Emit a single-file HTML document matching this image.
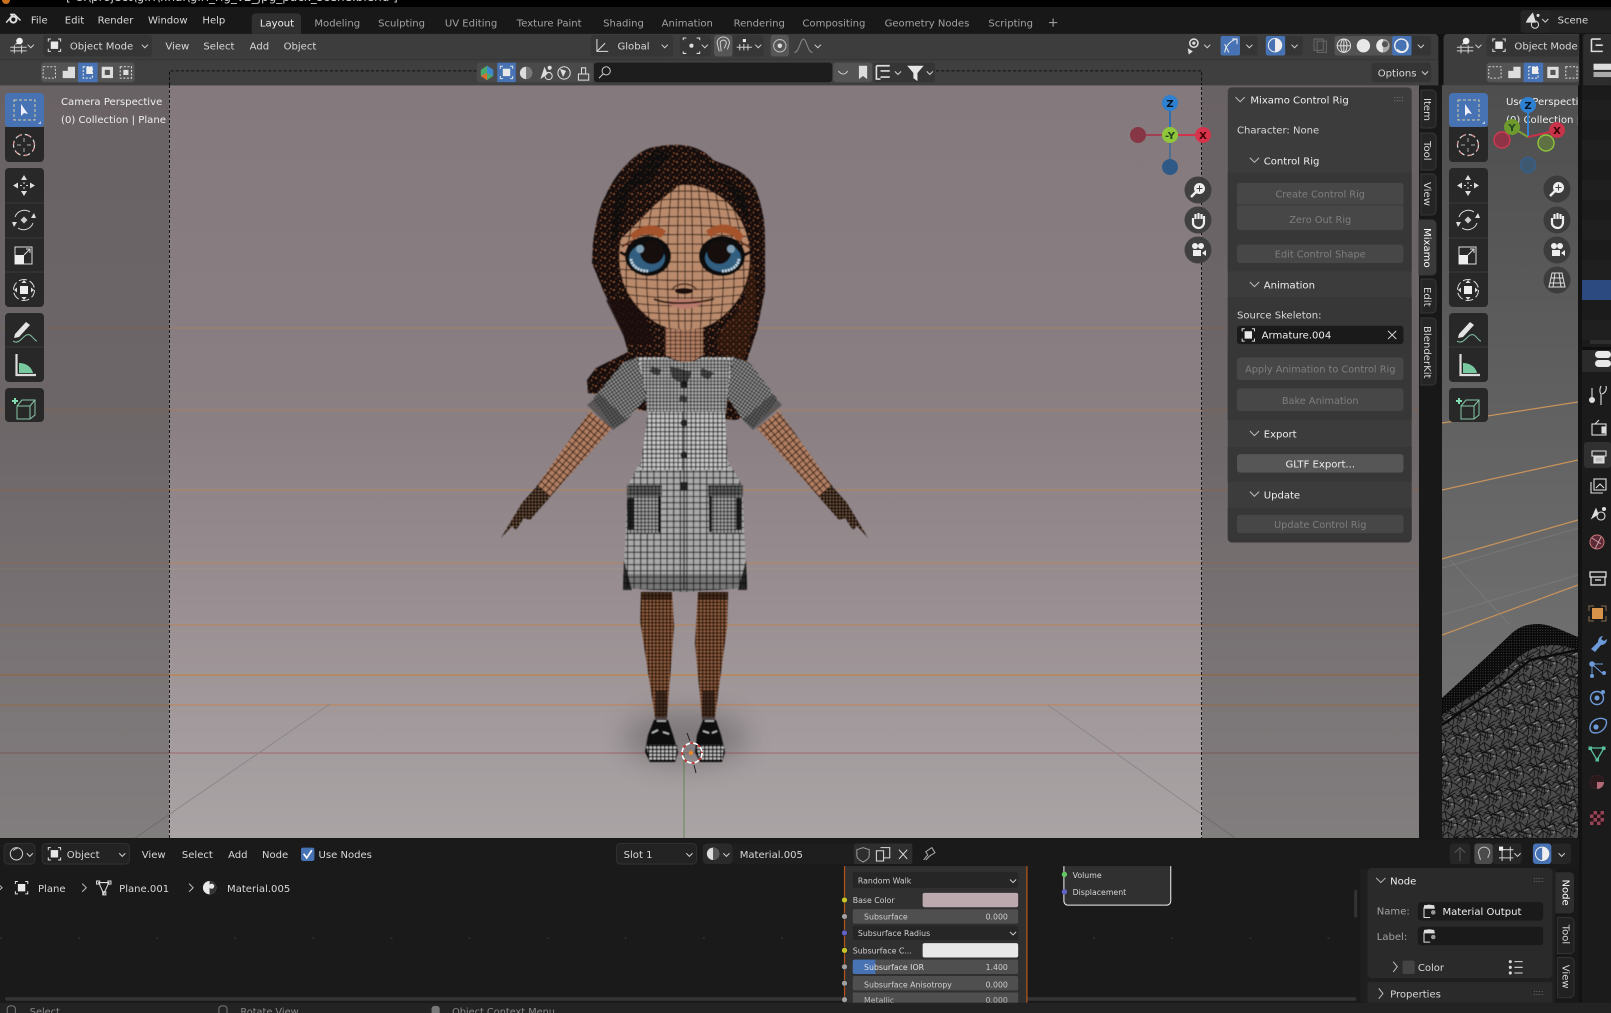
<!DOCTYPE html>
<html><head><meta charset="utf-8"><title>Blender</title>
<style>
html,body{margin:0;padding:0;background:#111;width:1611px;height:1013px;overflow:hidden}
svg{display:block;font-family:"DejaVu Sans","Liberation Sans",sans-serif;font-size:9.8px}
.t{fill:#d8d8d8}.m{fill:#a2a2a2}.w{fill:#eee}.d{fill:#7e7e7e}.c{text-anchor:middle}.e{text-anchor:end}
.s{fill:none;stroke:#ddd;stroke-width:1}
.o{fill:none;stroke:#c9803f}
</style></head><body>
<svg xmlns="http://www.w3.org/2000/svg" width="1611" height="1013" viewBox="0 0 1611 1013">
<defs>
<linearGradient id="vp" x1="0" y1="0" x2="0" y2="1"><stop offset="0" stop-color="#84797d"/><stop offset=".45" stop-color="#8a8083"/><stop offset=".7" stop-color="#9a9093"/><stop offset="1" stop-color="#aaa4a5"/></linearGradient>
<linearGradient id="vp2" x1="0" y1="0" x2="0" y2="1"><stop offset="0" stop-color="#4e4e4e"/><stop offset=".5" stop-color="#646464"/><stop offset="1" stop-color="#7a7a7a"/></linearGradient>
<pattern id="pDress" width="3.4" height="3.4" patternUnits="userSpaceOnUse"><rect width="3.4" height="3.4" fill="#b4b4b4"/><path d="M0 .4H3.4M.4 0V3.4" stroke="#111" stroke-width=".9"/></pattern>
<pattern id="pTorso" width="4.4" height="4.4" patternUnits="userSpaceOnUse"><rect width="4.4" height="4.4" fill="#c6c6c6"/><path d="M0 .5H4.4M.5 0V4.4" stroke="#0c0c0c" stroke-width=".9"/></pattern>
<pattern id="pSkirt" width="6.6" height="6.2" patternUnits="userSpaceOnUse"><rect width="6.6" height="6.2" fill="#a9a9a9"/><path d="M0 .5H6.6M.5 0V6.2" stroke="#111" stroke-width="1"/></pattern>
<pattern id="pPocket" width="3.6" height="3.6" patternUnits="userSpaceOnUse"><rect width="3.6" height="3.6" fill="#a0a0a0"/><path d="M0 .4H3.6M.4 0V3.6" stroke="#0c0c0c" stroke-width=".9"/></pattern>
<pattern id="pSleeve" width="3" height="3" patternUnits="userSpaceOnUse" patternTransform="rotate(-35)"><rect width="3" height="3" fill="#999"/><path d="M0 .4H3M.4 0V3" stroke="#111" stroke-width=".8"/></pattern>
<pattern id="pSleeveR" width="3" height="3" patternUnits="userSpaceOnUse" patternTransform="rotate(35)"><rect width="3" height="3" fill="#999"/><path d="M0 .4H3M.4 0V3" stroke="#111" stroke-width=".8"/></pattern>
<pattern id="pArm" width="5.4" height="5.4" patternUnits="userSpaceOnUse" patternTransform="rotate(-50)"><rect width="5.4" height="5.4" fill="#b07e62"/><path d="M0 .5H5.4M.5 0V5.4" stroke="#2c1810" stroke-width=".9"/></pattern>
<pattern id="pLeg" width="3.6" height="3.4" patternUnits="userSpaceOnUse"><rect width="3.6" height="3.4" fill="#9a6444"/><path d="M0 .5H3.6M.5 0V3.4" stroke="#140a06" stroke-width="1.3"/></pattern>
<pattern id="pNeck" width="5" height="4" patternUnits="userSpaceOnUse"><rect width="5" height="4" fill="#b07e62"/><path d="M0 .5H5M.5 0V4" stroke="#2c1810" stroke-width=".8"/></pattern>
<pattern id="pHair" width="9" height="8" patternUnits="userSpaceOnUse"><rect width="9" height="8" fill="#17100e"/><circle cx="2" cy="2" r=".8" fill="#b5683f"/><circle cx="6.5" cy="4.5" r=".7" fill="#8a4f30"/><circle cx="8" cy="1" r=".55" fill="#c0703f"/><circle cx="4" cy="6.8" r=".6" fill="#6a3c26"/></pattern>
<pattern id="pHair2" width="6" height="6" patternUnits="userSpaceOnUse"><rect width="6" height="6" fill="#2a1711"/><circle cx="1.5" cy="2" r=".9" fill="#7c452c"/><circle cx="4.5" cy="4.6" r=".8" fill="#603523"/></pattern>
<pattern id="pHand" width="3.2" height="3.2" patternUnits="userSpaceOnUse"><rect width="3.2" height="3.2" fill="#1c1410"/><circle cx="1.2" cy="1.2" r=".8" fill="#9a7058"/></pattern>
<pattern id="pShoe" width="4" height="3.6" patternUnits="userSpaceOnUse"><rect width="4" height="3.6" fill="#c8c8c8"/><path d="M0 .6H4M.6 0V3.6" stroke="#050505" stroke-width="1.4"/></pattern>
<pattern id="pMesh" width="44" height="38" patternUnits="userSpaceOnUse" patternTransform="scale(.55) rotate(-8)"><rect width="44" height="38" fill="#4a4a4a"/><path d="M0 6L12 0M6 10L20 2L30 12L44 4M0 20L10 12L22 22L36 14L44 22M4 34L16 24L28 34L40 26M12 0L10 12L16 24L14 38M30 12L28 34M36 14L40 26L38 38M20 2L22 22M0 30L8 38M24 38L28 34M0 14L44 30M0 26L44 10M20 38L36 0" stroke="#0d0d0d" stroke-width="1.5" fill="none"/><path d="M26 20L34 17M6 26L12 23M33 31L37 28" stroke="#8a8a8a" stroke-width="2.4"/></pattern>
<pattern id="pMeshD" width="2.6" height="2.6" patternUnits="userSpaceOnUse"><rect width="2.6" height="2.6" fill="#0a0a0a"/><circle cx="1" cy="1" r=".4" fill="#7a7a7a"/></pattern>
<pattern id="pGrid" width="76" height="76" patternUnits="userSpaceOnUse"><rect x="0" y="0" width="2" height="2" fill="#2b2b2b"/><rect x="19" y="0" width="1" height="1" fill="#222"/><rect x="38" y="0" width="1" height="1" fill="#222"/><rect x="57" y="0" width="1" height="1" fill="#222"/><rect x="0" y="38" width="1" height="1" fill="#222"/><rect x="38" y="38" width="1" height="1" fill="#222"/></pattern>
<filter id="soft" x="-5%" y="-5%" width="110%" height="110%"><feGaussianBlur stdDeviation=".5"/></filter>
<filter id="sh" x="-50%" y="-100%" width="200%" height="300%"><feGaussianBlur stdDeviation="14"/></filter>
<clipPath id="clipFace"><path d="M685 185C712 185 742 205 749 245C753 280 740 305 715 322C700 332 670 332 655 322C630 305 616 280 620 245C626 210 655 185 685 185Z"/></clipPath>
<clipPath id="clipVP2"><rect x="1442" y="85" width="136" height="753"/></clipPath>
<g id="obj"><path d="M-6 -3.5V-6H-3.5M3.5 -6H6V-3.5M6 3.5V6H3.5M-3.5 6H-6V3.5" fill="none" stroke="#ddd"/><rect x="-3.6" y="-3.6" width="7.2" height="7.2" fill="#e8e8e8"/></g>
<path id="chev" d="M-3 -1.5L0 1.5L3 -1.5" fill="none" stroke="#ccc" stroke-width="1"/>
<path id="chevL" d="M-4.5 -2.5L0 2L4.5 -2.5" fill="none" stroke="#bbb" stroke-width="1"/>
<g id="vpIcon"><path d="M-8 3H8M-8 6.5H8M-4 1V9M3 1V9" stroke="#ccc" fill="none"/><circle cx="1" cy="-3" r="3.2" fill="#eee"/><path d="M-3 0L0 -1" stroke="#eee"/></g>
<g id="tools">
 <rect x="5" y="93" width="39" height="34" rx="4" fill="#4772b3"/>
 <path d="M5 127H44V158a4 4 0 0 1-4 4H9a4 4 0 0 1-4-4Z" fill="#282828"/>
 <rect x="5" y="168" width="39" height="139" rx="4" fill="#282828"/>
 <path d="M5 203H44M5 238H44M5 272H44" stroke="#3a3a3a"/>
 <rect x="5" y="313" width="39" height="69" rx="4" fill="#282828"/><path d="M5 347H44" stroke="#3a3a3a"/>
 <rect x="5" y="388" width="39" height="34" rx="4" fill="#282828"/>
 <rect x="14" y="100" width="21" height="20" fill="none" stroke="#d9cfa0" stroke-dasharray="3 2" stroke-width="1"/><path d="M21 104V116L24 113L28 114Z" fill="#eef"/><path d="M41 124h-3l3-3z" fill="#b7c9e6"/>
 <circle cx="24" cy="145" r="10.5" fill="none" stroke="#ddd" stroke-width="1.2" stroke-dasharray="7 3"/><circle cx="24" cy="145" r="10.5" fill="none" stroke="#d88" stroke-width="1.2" stroke-dasharray="3 7" stroke-dashoffset="-3"/><path d="M24 138V142M24 148V152M17 145H21M27 145H31" stroke="#aaa"/>
 <path d="M24 175l-3 5h6zM24 196l-3-5h6zM13 185.5l5-3v6zM35 185.5l-5-3v6z" fill="#ddd"/><path d="M24 182V184M24 187V189M20 185.5H22M26 185.5H28" stroke="#ddd"/>
 <path d="M15 217a10 10 0 0 1 15-5M33 223a10 10 0 0 1-15 5" fill="none" stroke="#ddd"/><path d="M34 213l2 5h-5zM14 227l-2-5h5z" fill="#ddd"/><path d="M24 216.500l3.500 3.500-3.500 3.500-3.500-3.500z" fill="#ccc"/>
 <rect x="15" y="247" width="17" height="17" fill="none" stroke="#ddd"/><rect x="15" y="255" width="9" height="9" fill="#eee"/><path d="M24 255L30 249M26 249H30V253" fill="none" stroke="#ddd"/>
 <circle cx="24" cy="290" r="10.5" fill="none" stroke="#ddd" stroke-dasharray="8 3"/><rect x="20" y="286" width="8" height="8" fill="#eee"/><path d="M24 280l-2.500 3h5zM24 300l-2.500-3h5zM14 290l3-2.500v5zM34 290l-3-2.500v5z" fill="#ddd"/>
 <path d="M15 334L26 322L30 325L19 337L14 338Z" fill="#e4e4e4"/><path d="M13 341C20 346 24 332 30 335C33 337 35 341 37 341" fill="none" stroke="#86c7a8" stroke-width="1"/>
 <path d="M16.500 354V375H36" fill="none" stroke="#ddd" stroke-width="2.2"/><path d="M19 363C27 363 32 368 33 373H19Z" fill="#78c9a0"/>
 <path d="M12 401h6M15 398v6" stroke="#7fdcae" stroke-width="2"/><path d="M17 406L22 400H35V415L30 419H17ZM17 406H30V419M30 406L35 400" fill="none" stroke="#86c7a8"/>
</g>
<g id="navZoom"><circle r="13.5" fill="#3a3a3a" opacity=".9"/><circle cx="1.5" cy="-1.500" r="5.500" fill="#eee"/><path d="M-2 2L-7 7" stroke="#eee" stroke-width="2.5"/><path d="M1.500 -4.500V1.500M-1.500 -1.500H4.500" stroke="#444"/></g>
<g id="navHand"><circle r="13.5" fill="#3a3a3a" opacity=".9"/><path d="M-5 -2V3C-5 6 -2 8 1 8C4 8 6 5 6 2V-4M-2.500 -1V-6M.5 -1V-7M3.500 -1V-6" fill="none" stroke="#eee" stroke-width="2.2"/></g>
<g id="navCam"><circle r="13.5" fill="#3a3a3a" opacity=".9"/><circle cx="-3" cy="-4" r="3" fill="#eee"/><circle cx="3" cy="-4" r="3" fill="#eee"/><rect x="-5" y="0" width="8" height="6" fill="#eee"/><path d="M4 3L8 0V6Z" fill="#eee"/></g>
</defs>

<rect width="1611" height="1013" fill="#121212"/>
<rect width="1611" height="7" fill="#000"/>
<circle cx="6" cy="0" r="4" fill="#c8701c"/>
<text x="66" y="1" style="font-size:12px" fill="#ccc">[ C:\project\girl\final\girl_rig_v2_jpg_pack_scene.blend ] *</text>
<rect y="7" width="1611" height="27" fill="#181818"/>

<!-- MAIN VIEWPORT -->
<rect x="0" y="85" width="1419" height="753" fill="url(#vp)"/>
<g stroke-width="1.2">
 <path d="M0 328H1419" class="o" opacity=".35"/><path d="M0 410H1419" class="o" opacity=".4"/><path d="M0 490H1419" class="o" opacity=".5"/><path d="M0 563H1419" class="o" opacity=".5"/><path d="M0 625H1419" class="o" opacity=".55"/><path d="M0 675H1419" class="o" stroke-width="1.8" opacity=".65"/><path d="M0 705H1419" class="o" opacity=".65"/>
 <path d="M0 631H1419M0 681H1419M0 711H1419M0 569H1419" stroke="#a39a8c" stroke-opacity=".5" fill="none"/>
 <path d="M0 753H1419" stroke="#a0606a" stroke-opacity=".7"/>
 <path d="M684 753V838" stroke="#6f8c60"/>
 <path d="M135 838L330 704M1235 838L1048 705" stroke="#8d8789" stroke-width="1"/>
</g>
<rect x="0" y="85" width="169" height="753" fill="#3a3a3a" opacity=".36"/>
<rect x="1202" y="85" width="217" height="753" fill="#3a3a3a" opacity=".36"/>

<!-- character -->
<ellipse cx="686" cy="738" rx="62" ry="26" fill="#000" opacity=".22" filter="url(#sh)"/>
<g filter="url(#soft)">
 <path d="M673 145C690 144 705 150 713 160C722 164 728 165 733 168C748 175 755 185 757 193C765 215 765 230 765 243L765 290L757 330L747 360L746 400C747 412 745 418 735 420L640 410L607 395L588 393L587 380L596 368L628 352L622 330L603 290L592 263L593 243C596 222 600 205 606 195C612 180 630 155 650 148C660 146 665 145 673 145Z" fill="url(#pHair)"/>
 <path d="M748 250C762 290 757 320 745 355L738 395L715 340L745 300Z" fill="url(#pHair2)"/>
 <path d="M606 300L628 345L655 345L640 300Z" fill="#1c1210" opacity=".85"/>
 <path d="M610 250L640 195L672 152L655 150L615 195Z" fill="#0c0707" opacity=".55"/>
 <path d="M690 150L745 195L750 225L715 165Z" fill="#0c0707" opacity=".6"/>
 <path d="M665 322L665 355L680 362L692 362L703 355L703 322Z" fill="url(#pNeck)"/>
 <g id="armL"><path d="M590 411L536 487L550 497L612 428Z" fill="url(#pArm)"/><path d="M538 485L522 503L501 538L512 526L516 530L524 518L530 520L550 497Z" fill="url(#pHand)"/></g>
 <use href="#armL" transform="translate(1369,0) scale(-1,1)"/>
 <path d="M641 592L672 592L674 627L667 717L655 717L640 620Z" fill="url(#pLeg)"/>
 <path d="M698 592L728 592L727 627L715 717L702 717L695 643Z" fill="url(#pLeg)"/>
 <path d="M641 592H672V600H641ZM698 592H728V600H698Z" fill="#140a06" opacity=".55"/>
 <path d="M655 690L667 690L667 720L655 720ZM702 690L715 690L715 720L702 720Z" fill="#1a120e" opacity=".6"/>
 <path d="M654 720L668 720L673 735L678 752L675 762L650 762L645 752L648 735Z" fill="#0a0a0a"/>
 <path d="M703 720L716 720L721 735L725 752L722 762L700 762L695 752L697 735Z" fill="#0a0a0a"/>
 <path d="M646 745H677L675 761H650Z" fill="url(#pShoe)"/><path d="M696 745H724L722 761H700Z" fill="url(#pShoe)"/>
 <path d="M657 721h9M705 721h9M652 733l6-3M663 732l6 2M703 731l6 2M712 733l5-2" stroke="#ddd" stroke-width="1.6" opacity=".85"/>
 <path d="M640 462L628 485L623 588L683 592L747 588L742 485L727 460Z" fill="url(#pSkirt)"/>
 <path d="M623 574L747 574L747 588L683 592L623 588Z" fill="#1a1a1a" opacity=".35"/>
 <path d="M624 560L632 590L623 590ZM746 560L738 590L747 590Z" fill="#0a0a0a" opacity=".8"/>
 <path d="M647 397L648 413L640 470L728 470L725 417L727 397L733 357L703 357L692 362L680 362L665 357L637 357Z" fill="url(#pTorso)"/>
 <path d="M640 360L665 358L680 362L692 362L703 358L730 360L726 412L647 412Z" fill="url(#pDress)" opacity=".9"/>
 <path d="M684 362V590" stroke="#0c0c0c" stroke-width="1.2"/>
 <circle cx="684" cy="385" r="3.5" fill="#222"/><circle cx="684" cy="423" r="3.5" fill="#222"/><circle cx="684" cy="455" r="3.5" fill="#222"/><rect x="680" y="482" width="8" height="8" fill="#222"/>
 <path d="M652 366L662 370L658 376L650 372ZM670 366L692 372L686 386L672 378ZM702 368L714 373L708 380L700 375ZM680 395l8 2-2 6-7-2Z" fill="#111" opacity=".6"/>
 <path d="M637 357L623 363L592 400L613 428L627 420L647 397Z" fill="url(#pSleeve)"/>
 <path d="M733 357L750 363L778 400L753 428L743 420L727 397Z" fill="url(#pSleeveR)"/>
 <path d="M587 405L613 430L627 420L600 394Z" fill="#3a3a3a" opacity=".6"/>
 <path d="M782 405L753 430L743 420L772 394Z" fill="#3a3a3a" opacity=".6"/>
 <path d="M628 485H662L660 533H628Z" fill="url(#pPocket)"/><path d="M708 485H742V533H710Z" fill="url(#pPocket)"/>
 <path d="M627 485H662V496H627ZM708 485H743V496H708Z" fill="#111" opacity=".45"/>
 <path d="M628 498H634V530H628ZM736 498H742V530H736ZM658 496h3v36h-3ZM709 496h3v36h-3Z" fill="#0a0a0a" opacity=".85"/>
 <!-- face -->
 <path d="M685 185C712 185 742 205 749 245C753 280 740 305 715 322C700 332 670 332 655 322C630 305 616 280 620 245C626 210 655 185 685 185Z" fill="#b98a6c"/>
 <g clip-path="url(#clipFace)" fill="none" stroke="#2c1810" stroke-width=".95">
  <path d="M685 183V335M679 183Q676 255 679 335M691 183Q694 255 691 335M672 183Q664 255 670 335M698 183Q706 255 700 335M664 183Q652 255 661 335M706 183Q718 255 709 335M656 185Q640 255 651 335M714 185Q730 255 719 335M648 190Q628 255 641 335M722 190Q742 255 729 335M640 198Q618 255 631 330M730 198Q752 255 739 330"/>
  <path d="M615 190Q685 176 755 190M615 197Q685 185 755 197M615 205Q685 193 755 205M615 213Q685 202 755 213M615 221Q685 212 755 221M615 229Q685 222 755 229M615 237Q685 232 755 237M615 245Q685 243 755 245M615 253Q685 253 755 253M615 261Q685 263 755 261M615 269Q685 274 755 269M615 277Q685 284 755 277M615 285Q685 294 755 285M615 293Q685 303 755 293M615 301Q685 311 755 301M615 309Q685 319 755 309M615 316Q685 326 755 316"/>
 </g>
 <path d="M682 183L655 205L623 237L616 240L630 190L660 178Z" fill="url(#pHair)"/>
 <path d="M630 235C640 224 655 222 666 231L661 238C650 232 640 233 634 240Z" fill="#a4522c"/>
 <path d="M706 231C718 221 736 222 744 237L738 241C730 231 718 231 710 237Z" fill="#a4522c"/>
 <path d="M622 247C635 236 655 236 668 248M702 248C718 236 735 236 750 248" stroke="#5b2c18" stroke-width="1.8" fill="none"/>
 <ellipse cx="648" cy="256" rx="23" ry="20" fill="#0a0b0e"/><ellipse cx="722" cy="256" rx="23" ry="20" fill="#0a0b0e"/>
 <ellipse cx="647" cy="258" rx="18" ry="14" fill="#325f7f"/><ellipse cx="723" cy="258" rx="18" ry="14" fill="#325f7f"/>
 <path d="M631 259A16 13 0 0 0 648 271" stroke="#c9dbe6" stroke-width="2.600" fill="none" stroke-dasharray="2 1"/><path d="M739 259A16 13 0 0 1 722 271" stroke="#c9dbe6" stroke-width="2.600" fill="none" stroke-dasharray="2 1"/>
 <circle cx="652" cy="252" r="12" fill="#120d0c"/><circle cx="719" cy="252" r="12" fill="#120d0c"/>
 <circle cx="640" cy="249" r="4" fill="#7f9eb2"/><circle cx="731" cy="249" r="4" fill="#7f9eb2"/>
 <path d="M620 252L627 256M743 256L750 252" stroke="#120b08" stroke-width="3"/>
 <path d="M672 290C676 282 692 282 697 290" stroke="#4d2c1c" stroke-width="1.400" fill="none"/>
 <ellipse cx="684" cy="291" rx="9" ry="3" fill="#1a0e09"/>
 <path d="M666 302C678 298 690 298 703 302C695 311 675 311 666 302Z" fill="#b87a6c"/>
 <path d="M654 299C665 304 690 305 714 299" stroke="#2a1209" stroke-width="1.800" fill="none"/>
</g>
<circle cx="692" cy="753" r="10" fill="none" stroke="#fff" stroke-width="1.600" stroke-dasharray="5 3"/>
<circle cx="692" cy="753" r="10" fill="none" stroke="#d03030" stroke-width="1.600" stroke-dasharray="3 5" stroke-dashoffset="-5"/>
<circle cx="691" cy="753" r="2.200" fill="#e38a30"/>
<path d="M687 733L690 741M694 765L696 773" stroke="#222"/>

<path d="M169.5 838V71H1201.5V838" fill="none" stroke="#000" stroke-opacity=".85" stroke-dasharray="3 2"/>

<!-- main gizmo -->
<g>
 <path d="M1170 111V127" stroke="#2f6fb0" stroke-width="2"/><path d="M1146 135H1162" stroke="#a04050" stroke-width="2"/><path d="M1178 135H1195" stroke="#d0334a" stroke-width="2"/><path d="M1170 143V159" stroke="#4f6f90" stroke-width="2"/>
 <circle cx="1138" cy="135" r="8" fill="#863644"/><circle cx="1203" cy="135" r="8" fill="#d5344c"/><circle cx="1170" cy="103" r="8" fill="#2e80d0"/><circle cx="1170" cy="167" r="8" fill="#2f5a88"/>
 <circle cx="1170" cy="135" r="8" fill="#8fc63a"/>
 <text x="1203" y="139" class="c" style="font-size:10px;font-weight:bold" fill="#400">X</text><text x="1170" y="107" class="c" style="font-size:10px;font-weight:bold" fill="#012">Z</text><text x="1170" y="139" class="c" style="font-size:10px;font-weight:bold" fill="#242">-Y</text>
</g>
<use href="#navZoom" x="1198" y="190"/><use href="#navHand" x="1198" y="220"/><use href="#navCam" x="1198" y="250"/>

<use href="#tools"/>
<text x="61" y="105" class="w" style="font-size:10.1px">Camera Perspective</text>
<text x="61" y="123" class="w" style="font-size:10.1px">(0) Collection | Plane</text>

<rect x="1419" y="85" width="23" height="753" fill="#181818"/>
<g fill="#252525" stroke="#383838">
 <path d="M1421 90H1432a4 4 0 0 1 4 4V124a4 4 0 0 1-4 4H1421Z"/>
 <path d="M1421 133H1432a4 4 0 0 1 4 4V166a4 4 0 0 1-4 4H1421Z"/>
 <path d="M1421 174H1432a4 4 0 0 1 4 4V211a4 4 0 0 1-4 4H1421Z"/>
 <path d="M1419 220H1432a4 4 0 0 1 4 4V271a4 4 0 0 1-4 4H1419Z" fill="#3a3a3a"/>
 <path d="M1421 279H1432a4 4 0 0 1 4 4V309a4 4 0 0 1-4 4H1421Z"/>
 <path d="M1421 318H1432a4 4 0 0 1 4 4V381a4 4 0 0 1-4 4H1421Z"/>
</g>
<g style="font-size:10.1px" class="t">
 <text transform="translate(1424,98) rotate(90)">Item</text>
 <text transform="translate(1424,141) rotate(90)">Tool</text>
 <text transform="translate(1424,182) rotate(90)">View</text>
 <text transform="translate(1424,228) rotate(90)" fill="#fff">Mixamo</text>
 <text transform="translate(1424,287) rotate(90)">Edit</text>
 <text transform="translate(1424,326) rotate(90)">BlenderKit</text>
</g>

<!-- RIGHT VIEWPORT -->
<rect x="1442" y="85" width="136" height="753" fill="url(#vp2)"/>
<g clip-path="url(#clipVP2)">
 <path d="M1442 423L1578 402M1442 490L1578 460M1442 559L1578 520M1442 635L1578 585" stroke="#c9935a" stroke-width="1.200" fill="none"/>
 <path d="M1442 568L1578 528M1442 615L1578 575M1450 560L1510 625" stroke="#808080" stroke-opacity=".6" fill="none"/>
 <path d="M1442 698L1478 665L1510 635C1520 625 1530 624 1540 624C1555 626 1565 632 1578 637V838H1442Z" fill="url(#pMesh)"/>
 <path d="M1442 698L1478 665L1510 635C1520 625 1530 624 1540 624C1555 626 1565 632 1578 637V650C1550 640 1530 645 1510 665L1480 690L1442 715Z" fill="url(#pMeshD)"/>
 <path d="M1442 725L1500 685L1530 660L1578 650" stroke="#0c0c0c" stroke-width="2.500" fill="none"/>
</g>
<g transform="translate(1444,0)"><use href="#tools"/></g>
<g clip-path="url(#clipVP2)">
 <text x="1506" y="105" class="w" style="font-size:10.1px">User Perspective</text>
 <text x="1506" y="123" class="w" style="font-size:10.1px">(0) Collection | Plane</text>
 <path d="M1528 137V110" stroke="#2e80d0" stroke-width="2"/><path d="M1528 137L1515 129" stroke="#7ba33a" stroke-width="2"/><path d="M1528 137L1550 132" stroke="#c8334a" stroke-width="2"/>
 <circle cx="1502" cy="140" r="8" fill="#8f3446" stroke="#cf3a52" stroke-width="1.400"/>
 <circle cx="1512" cy="127" r="8" fill="#6f9a2e"/><circle cx="1557" cy="130" r="8" fill="#c8334a"/>
 <circle cx="1528" cy="105" r="8" fill="#2e80d0"/>
 <circle cx="1546" cy="143" r="8" fill="#5f7042" stroke="#8fc63a" stroke-width="1.400"/>
 <circle cx="1528" cy="165" r="7.500" fill="#3e5870" stroke="#35608e" stroke-width="1.400"/>
 <text x="1512" y="131" class="c" style="font-size:10px;font-weight:bold" fill="#242">Y</text><text x="1557" y="134" class="c" style="font-size:10px;font-weight:bold" fill="#300">X</text><text x="1528" y="109" class="c" style="font-size:10px;font-weight:bold" fill="#012">Z</text>
</g>
<use href="#navZoom" x="1557" y="189"/><use href="#navHand" x="1557" y="220"/><use href="#navCam" x="1557" y="250"/>
<circle cx="1557" cy="280" r="13.500" fill="#3a3a3a" opacity=".9"/><path d="M1552 273H1562L1565 287H1549ZM1551 278H1563M1550 283H1564M1555 273L1553 287M1559 273L1561 287" stroke="#ddd" fill="none"/>

<!-- right column -->
<rect x="1582" y="34" width="29" height="979" fill="#1b1b1b"/>
<g fill="#1f1f1f"><rect x="1582" y="100" width="29" height="20"/><rect x="1582" y="140" width="29" height="20"/><rect x="1582" y="180" width="29" height="20"/><rect x="1582" y="220" width="29" height="20"/><rect x="1582" y="260" width="29" height="20"/><rect x="1582" y="320" width="29" height="20"/></g>
<rect x="1582" y="280" width="29" height="20" fill="#2c4a80"/>
<rect x="1590" y="340" width="21" height="4" fill="#2e2e2e"/>
<rect x="1582" y="347" width="29" height="23" fill="#0f0f0f"/>
<path d="M1582 350h29v22h-29z" fill="#2b2b2b"/>
<rect x="1595" y="351" width="16" height="7" rx="3.500" fill="#e8e8e8"/><rect x="1595" y="360" width="16" height="7" rx="3.500" fill="#e8e8e8"/>
<rect x="1584" y="442" width="27" height="26" rx="3" fill="#303030"/>
<g fill="none" stroke="#ddd" stroke-width="1.100">
 <path d="M1592 388V398M1601 386C1599 390 1600 393 1601 394V405M1606 386C1607 390 1605 393 1602 394"/><circle cx="1592" cy="400" r="2.500" fill="#ddd"/>
 <rect x="1592" y="424" width="14" height="11"/><path d="M1595 424L1599 420"/><rect x="1602" y="427" width="3" height="6" fill="#ddd"/>
 <path d="M1592 451H1606V456H1592ZM1594 456V463H1604V456"/><rect x="1595" y="457" width="8" height="5" fill="#bbb"/>
 <rect x="1594" y="479" width="12" height="11"/><path d="M1591 482V493H1603"/><path d="M1596 488L1600 484L1604 488"/>
 <circle cx="1601" cy="516" r="4"/><path d="M1592 518L1596 509L1598 514Z" fill="#ddd"/><circle cx="1604" cy="509" r="1.500" fill="#ddd"/>
</g>
<circle cx="1597" cy="542" r="7" fill="#5c2a34" stroke="#c77"/><path d="M1592 538L1601 544M1595 549L1601 537" stroke="#c99aa4" fill="none"/>
<path d="M1590 572H1606V577H1590ZM1591 577V585H1605V577ZM1595 580H1601" fill="none" stroke="#e8e8e8" stroke-width="1.200"/>
<rect x="1592" y="608" width="11" height="11" fill="#d8934a"/><path d="M1589 611V606H1594M1601 606H1606V611M1606 616V621H1601M1594 621H1589V616" stroke="#8a6c4c" fill="none"/>
<path d="M1603 636C1600 636 1598 639 1598 642L1591 649L1595 652L1601 645C1605 645 1607 642 1607 639L1604 641L1601 639Z" fill="#6d9ad8"/>
<path d="M1592 664L1602 673M1592 664L1592 676M1592 664L1603 664" stroke="#6d9ad8" fill="none"/><circle cx="1592" cy="664" r="2.800" fill="#6d9ad8"/><circle cx="1604" cy="673" r="2" fill="#6d9ad8"/><circle cx="1592" cy="676" r="2" fill="#6d9ad8"/>
<circle cx="1597" cy="698" r="6.500" fill="none" stroke="#6d9ad8" stroke-width="1.400"/><circle cx="1597" cy="698" r="2.500" fill="#6d9ad8"/><circle cx="1603" cy="692" r="2" fill="#6d9ad8"/>
<path d="M1590 728C1590 720 1600 716 1606 720C1608 725 1603 733 1595 733C1592 733 1590 731 1590 728Z" fill="none" stroke="#6d9ad8" stroke-width="1.400"/><circle cx="1596" cy="727" r="2.600" fill="#6d9ad8"/>
<path d="M1590 748H1604L1597 760Z" fill="none" stroke="#58c09a" stroke-width="1.300"/><rect x="1588.5" y="746.5" width="3.500" height="3.500" fill="#58c09a"/><rect x="1602" y="746.5" width="3.500" height="3.500" fill="#58c09a"/><rect x="1595.5" y="758" width="3.500" height="3.500" fill="#58c09a"/>
<circle cx="1597" cy="782" r="7" fill="#b16a76"/><path d="M1597 775A7 7 0 0 1 1604 782H1597V789A7 7 0 0 1 1597 775Z" fill="#2a1a1c"/>
<rect x="1590" y="811" width="14" height="14" fill="#944454"/><path d="M1590 811h3.500v3.500h-3.500zM1597 811h3.500v3.500h-3.500zM1593.500 814.500h3.500v3.500h-3.500zM1600.500 814.500h3.500v3.500h-3.500zM1590 818h3.500v3.500h-3.500zM1597 818h3.500v3.500h-3.500zM1593.500 821.500h3.500v3.500h-3.500zM1600.500 821.500h3.500v3.500h-3.500z" fill="#241417"/>

<g transform="scale(1.02742)">
 <circle cx="13" cy="19" r="3" fill="none" stroke="#ddd" stroke-width="2"/><path d="M6 22L12 15L10 14H14L20 20" stroke="#ddd" fill="none" stroke-width="1.400"/>
 <text x="30" y="23" class="t">File</text><text x="63" y="23" class="t">Edit</text><text x="95" y="23" class="t">Render</text><text x="144" y="23" class="t">Window</text><text x="197" y="23" class="t">Help</text>
 <path d="M245 33V17a4 4 0 0 1 4-4H289a4 4 0 0 1 4 4V33Z" fill="#303030"/>
 <text x="253" y="26" class="w">Layout</text>
 <g class="m"><text x="306" y="26">Modeling</text><text x="368" y="26">Sculpting</text><text x="433" y="26">UV Editing</text><text x="503" y="26">Texture Paint</text><text x="587" y="26">Shading</text><text x="644" y="26">Animation</text><text x="714" y="26">Rendering</text><text x="781" y="26">Compositing</text><text x="861" y="26">Geometry Nodes</text><text x="962" y="26">Scripting</text></g>
 <path d="M1021 22H1029M1025 18V26" stroke="#aaa"/>
 <rect x="1480" y="10" width="30" height="22" rx="3" fill="#252525"/><rect x="1509" y="10" width="59" height="22" fill="#222"/>
 <path d="M1487 18L1492 12L1495 22H1485Z" fill="#ddd"/><circle cx="1494" cy="24" r="3.500" fill="none" stroke="#ddd"/><circle cx="1497" cy="15" r="1.500" fill="#ddd"/>
 <use href="#chev" x="1504" y="20"/>
 <text x="1516" y="23" class="t">Scene</text>

 <path d="M0 33H1396a4 4 0 0 1 4 4V83H0Z" fill="#3d3d3d"/>
 <path d="M0 58H1400" stroke="#353535"/>
 <rect x="0" y="59" width="1400" height="24" fill="#3f3f3f"/>
 <path d="M165 83V69H1169.500V83" fill="none" stroke="#111" stroke-dasharray="3 2"/>
 <use href="#vpIcon" x="18" y="43"/><use href="#chev" x="30" y="45"/>
 <rect x="42" y="34" width="106" height="21" rx="3" fill="#353535"/>
 <use href="#obj" x="53" y="44"/><text x="68" y="48" class="t">Object Mode</text><use href="#chev" x="141" y="45"/>
 <g class="t"><text x="161" y="48">View</text><text x="198" y="48">Select</text><text x="243" y="48">Add</text><text x="276" y="48">Object</text></g>
 <rect x="575" y="34" width="80" height="21" rx="3" fill="#363636"/>
 <path d="M581 38V50H592M581 50L589 42" stroke="#ddd" fill="none"/><text x="601" y="48" class="t">Global</text><use href="#chev" x="647" y="45"/>
 <rect x="662" y="34" width="30" height="21" rx="3" fill="#363636"/>
 <path d="M665 39V37H668M678 37H681V39M681 50V52H678M668 52H665V50" stroke="#ddd" fill="none"/><circle cx="673" cy="44.500" r="2" fill="#ddd"/><use href="#chev" x="686" y="45"/>
 <rect x="695" y="34" width="18" height="21" rx="3" fill="#565656"/><path d="M700 50L698 42A6 6 0 0 1 710 42L708 48M702 50L701 42A3 3 0 0 1 707 42L705 47" fill="none" stroke="#ccc"/>
 <rect x="713" y="34" width="30" height="21" rx="3" fill="#363636"/>
 <rect x="723" y="38" width="3" height="3" fill="#eee"/><path d="M717 46H732M720 43V49M724 43V49M728 43V49" stroke="#ccc"/><use href="#chev" x="738" y="45"/>
 <rect x="750" y="34" width="18" height="21" rx="3" fill="#565656"/><circle cx="759" cy="44.500" r="6" fill="none" stroke="#bbb"/><circle cx="759" cy="44.500" r="2.200" fill="#ddd"/>
 <path d="M773 51C778 51 779 38 782 38C785 38 786 51 791 51" fill="none" stroke="#888"/><use href="#chev" x="796" y="45"/>

 <circle cx="1162" cy="42" r="4" fill="none" stroke="#ddd" stroke-width="1.500"/><circle cx="1162" cy="42" r="1.600" fill="#ddd"/><path d="M1156 47L1161 50L1157 53Z" fill="#ddd"/><use href="#chev" x="1175" y="45"/>
 <rect x="1188" y="35" width="19" height="19" rx="2" fill="#4772b3"/><path d="M1192 51C1193 44 1198 40 1203 38M1199 38H1204V43" fill="none" stroke="#eee"/><path d="M1192 43L1196 51" stroke="#eee"/>
 <rect x="1207" y="35" width="17" height="19" rx="2" fill="#353535"/><use href="#chev" x="1216" y="45"/>
 <rect x="1232" y="35" width="19" height="19" rx="2" fill="#4772b3"/><circle cx="1241" cy="44" r="6.500" fill="none" stroke="#eee"/><path d="M1241 37.500A6.500 6.500 0 0 1 1241 50.500Z" fill="#eee"/>
 <rect x="1251" y="35" width="17" height="19" rx="2" fill="#353535"/><use href="#chev" x="1260" y="45"/>
 <rect x="1279" y="38" width="9" height="11" fill="none" stroke="#666"/><rect x="1282" y="40" width="9" height="11" fill="none" stroke="#666"/>
 <rect x="1299" y="35" width="75" height="19" rx="2" fill="#545454"/><rect x="1355" y="35" width="19" height="19" rx="2" fill="#4772b3"/>
 <circle cx="1308" cy="44.500" r="6.500" fill="none" stroke="#ddd"/><path d="M1301.500 44.500H1314.500M1308 38V51" stroke="#ddd"/><ellipse cx="1308" cy="44.500" rx="3" ry="6.500" fill="none" stroke="#ddd"/>
 <circle cx="1327" cy="44.500" r="6.500" fill="#e8e8e8"/>
 <circle cx="1346" cy="44.500" r="6.500" fill="#aaa"/><path d="M1346 38A6.500 6.500 0 0 0 1346 51Z" fill="#e8e8e8"/><circle cx="1348" cy="43" r="3" fill="#555"/>
 <circle cx="1364" cy="44.500" r="6.500" fill="none" stroke="#eee" stroke-width="1.400"/><path d="M1360 48A5 5 0 0 0 1369 42" stroke="#eee" fill="none" stroke-width="1.400"/>
 <rect x="1374" y="35" width="19" height="19" rx="2" fill="#353535"/><use href="#chev" x="1383" y="45"/>

 <rect x="40" y="61" width="91" height="19" rx="3" fill="#545454"/><rect x="76" y="61" width="19" height="19" fill="#4772b3"/>
 <rect x="42" y="65" width="12" height="11" fill="none" stroke="#ccc" stroke-dasharray="2 1.500"/>
 <path d="M61 74V69H66V65H73V76H61Z" fill="#ddd"/>
 <rect x="81" y="65" width="9" height="11" fill="none" stroke="#eee" stroke-dasharray="2 1.500"/><path d="M84 65H90V72H84Z" fill="#eee"/>
 <rect x="99" y="65" width="11" height="11" fill="#ddd"/><rect x="102" y="68" width="5" height="5" fill="#545454"/>
 <rect x="117" y="65" width="11" height="11" fill="none" stroke="#ddd" stroke-dasharray="2 1.500"/><rect x="120" y="68" width="5" height="5" fill="#ddd"/>
 <rect x="464" y="61" width="114" height="19" rx="3" fill="#4a4a4a"/><rect x="484" y="61" width="18" height="19" fill="#4772b3"/>
 <path d="M474 64L480 68V74L474 78L468 74V68Z" fill="#4aa86a"/><path d="M474 64L480 68V74L474 71Z" fill="#3f86d0"/><path d="M468 74L474 71L474 78Z" fill="#e0692e"/>
 <use href="#obj" x="493" y="70.500"/>
 <circle cx="512" cy="71" r="6" fill="#ddd"/><path d="M512 65A6 6 0 0 1 512 77Z" fill="#777"/>
 <path d="M526 77L530 65L533 72Z" fill="#ddd"/><circle cx="534" cy="74" r="3.500" fill="none" stroke="#ddd"/><circle cx="535" cy="66" r="2" fill="#ddd"/>
 <circle cx="549" cy="71" r="6" fill="none" stroke="#ddd"/><path d="M545 67L551 69L548 75Z" fill="#ddd"/>
 <path d="M563 72H573V78H563ZM566 72V66H570V72" fill="none" stroke="#ddd"/>
 <rect x="578" y="61" width="232" height="19" rx="3" fill="#1d1d1d"/>
 <circle cx="590" cy="69" r="4" fill="none" stroke="#ccc"/><path d="M587 72L583 76" stroke="#ccc"/>
 <rect x="811" y="61" width="38" height="19" rx="3" fill="#545454"/>
 <path d="M816 69C819 73 823 73 825 69" fill="none" stroke="#ccc"/><path d="M836 64H844V77L840 74L836 77Z" fill="#ddd"/>
 <rect x="850" y="61" width="60" height="19" rx="3" fill="#353535"/>
 <path d="M853 64H866M853 64V77H857M857 69H866M857 75H866" stroke="#ddd" fill="none" stroke-width="1.600"/><use href="#chev" x="874" y="71"/>
 <path d="M883 64H899L893 71V79L889 76V71Z" fill="#e6e6e6"/><use href="#chev" x="905" y="71"/>
 <rect x="1335" y="61" width="58" height="19" rx="3" fill="#353535"/><text x="1341" y="74.500" class="t">Options</text><use href="#chev" x="1387" y="71"/>

 <!-- N panel -->
 <rect x="1195" y="85" width="179" height="443" rx="4" fill="#3b3b3b" opacity=".98"/>
 <rect x="1195" y="168" width="179" height="96" fill="#373737"/>
 <rect x="1195" y="289" width="179" height="120" fill="#373737"/>
 <rect x="1195" y="435" width="179" height="34" fill="#373737"/>
 <path d="M1195 494H1374V524a4 4 0 0 1-4 4H1199a4 4 0 0 1-4-4Z" fill="#373737"/>
 <use href="#chevL" x="1207" y="97"/><text x="1217" y="100.500" class="w">Mixamo Control Rig</text>
 <path d="M1357 95h10M1357 98h10" stroke="#777" stroke-dasharray="1 1.500"/>
 <text x="1204" y="130" class="t">Character: None</text>
 <use href="#chevL" x="1221" y="156"/><text x="1230" y="160" class="w">Control Rig</text>
 <g fill="#474747"><path d="M1204 181a3 3 0 0 1 3-3H1363a3 3 0 0 1 3 3V199H1204Z"/><path d="M1204 200H1366V221a3 3 0 0 1-3 3H1207a3 3 0 0 1-3-3Z"/><rect x="1204" y="238" width="162" height="18" rx="3"/><rect x="1204" y="348" width="162" height="22" rx="3"/><rect x="1204" y="378" width="162" height="22" rx="3"/><rect x="1204" y="501" width="162" height="18" rx="3"/></g>
 <g class="d c" style="font-size:9.5px"><text x="1285" y="192">Create Control Rig</text><text x="1285" y="217">Zero Out Rig</text><text x="1285" y="250.500">Edit Control Shape</text><text x="1285" y="362.500">Apply Animation to Control Rig</text><text x="1285" y="393">Bake Animation</text><text x="1285" y="514">Update Control Rig</text></g>
 <use href="#chevL" x="1221" y="277"/><text x="1230" y="281" class="w">Animation</text>
 <text x="1204" y="310" class="t">Source Skeleton:</text>
 <rect x="1204" y="317" width="162" height="18" rx="3" fill="#1a1a1a"/><use href="#obj" x="1215" y="326"/><text x="1228" y="329.500" class="w">Armature.004</text><path d="M1351 322L1359 330M1359 322L1351 330" stroke="#ccc"/>
 <use href="#chevL" x="1221" y="422"/><text x="1230" y="426" class="w">Export</text>
 <rect x="1204" y="442" width="162" height="18" rx="3" fill="#565656"/><text x="1285" y="455" class="w c">GLTF Export...</text>
 <use href="#chevL" x="1221" y="481"/><text x="1230" y="485" class="w">Update</text>

 <path d="M1405 37a4 4 0 0 1 4-4H1537V83H1405Z" fill="#3d3d3d"/>
 <use href="#vpIcon" x="1426" y="43"/><use href="#chev" x="1439" y="45"/>
 <rect x="1447" y="34" width="90" height="21" rx="3" fill="#353535"/>
 <use href="#obj" x="1459" y="44"/><text x="1474" y="48" class="t">Object Mode</text>
 <rect x="1447" y="61" width="90" height="19" rx="3" fill="#545454"/><rect x="1483" y="61" width="19" height="19" fill="#4772b3"/>
 <rect x="1449" y="65" width="12" height="11" fill="none" stroke="#ccc" stroke-dasharray="2 1.500"/>
 <path d="M1468 74V69H1473V65H1480V76H1468Z" fill="#ddd"/>
 <rect x="1488" y="65" width="9" height="11" fill="none" stroke="#eee" stroke-dasharray="2 1.500"/><path d="M1491 65H1497V72H1491Z" fill="#eee"/>
 <rect x="1506" y="65" width="11" height="11" fill="#ddd"/><rect x="1509" y="68" width="5" height="5" fill="#545454"/>
 <rect x="1524" y="65" width="11" height="11" fill="none" stroke="#ddd" stroke-dasharray="2 1.500"/>
 <path d="M1541 37a4 4 0 0 1 4-4H1568V83H1541Z" fill="#2d2d2d"/>
 <path d="M1549 38H1558M1549 38V50H1553M1553 44H1560M1553 50H1560" stroke="#ddd" fill="none" stroke-width="1.500"/>
 <rect x="1551" y="62" width="17" height="6" fill="#ddd"/><rect x="1551" y="70" width="17" height="5" fill="#aaa"/>

 <!-- NODE EDITOR -->
 <rect x="0" y="816" width="1537" height="160" fill="#1a1a1a"/>
 <rect x="0" y="848" width="1537" height="128" fill="url(#pGrid)"/>
 <rect x="4" y="821" width="30" height="20" rx="4" fill="#232323" stroke="#303030"/>
 <circle cx="16" cy="831" r="6" fill="none" stroke="#ccc"/><path d="M13 828A4 4 0 0 1 17 826" stroke="#ccc" fill="none"/><use href="#chev" x="29" y="832"/>
 <rect x="41" y="821" width="85" height="20" rx="4" fill="#232323" stroke="#303030"/>
 <use href="#obj" x="53" y="831"/><text x="65" y="835" class="t">Object</text><use href="#chev" x="119" y="832"/>
 <g class="t"><text x="138" y="835">View</text><text x="177" y="835">Select</text><text x="222" y="835">Add</text><text x="255" y="835">Node</text></g>
 <rect x="293" y="825" width="13" height="13" rx="2" fill="#4772b3"/><path d="M295.500 831L298.500 835L303.500 827.500" fill="none" stroke="#fff" stroke-width="1.600"/>
 <text x="310" y="835" class="t">Use Nodes</text>
 <rect x="600" y="821" width="78" height="20" rx="4" fill="#232323" stroke="#303030"/><text x="607" y="835" class="t">Slot 1</text><use href="#chev" x="671" y="832"/>
 <rect x="684" y="821" width="29" height="20" rx="4" fill="#2a2a2a"/><circle cx="694" cy="831" r="6" fill="#ddd"/><path d="M694 825A6 6 0 0 1 694 837Z" fill="#555"/><use href="#chev" x="707" y="832"/>
 <rect x="713" y="821" width="118" height="20" fill="#1e1e1e"/><text x="720" y="835" class="t">Material.005</text>
 <rect x="831" y="821" width="57" height="20" rx="2" fill="#2e2e2e"/>
 <path d="M834 827L840 825L846 827V833C846 836 842 838 840 839C838 838 834 836 834 833Z" fill="none" stroke="#999"/>
 <path d="M853 828H860V838H853ZM857 825H866V835H860" fill="none" stroke="#ddd"/>
 <path d="M875 827L883 836M883 827L875 836" stroke="#ddd"/>
 <path d="M899 837L903 832L901 829L907 825L910 830L905 833L901 837" fill="none" stroke="#aaa"/>
 <rect x="1411" y="821" width="20" height="20" rx="3" fill="#262626"/><path d="M1421 825V838M1416 830L1421 825L1426 830" stroke="#555" fill="none"/>
 <rect x="1435" y="821" width="18" height="20" rx="3" fill="#4b4b4b"/><path d="M1441 837L1439 830A5.500 5.500 0 0 1 1450 830L1448 835" fill="none" stroke="#bbb"/>
 <rect x="1453" y="821" width="28" height="20" rx="3" fill="#262626"/>
 <path d="M1459 827H1473M1459 835H1473M1462 824V838M1470 824V838" stroke="#ccc"/><rect x="1459" y="824" width="4" height="4" fill="#eee"/><use href="#chev" x="1477" y="832"/>
 <rect x="1492" y="821" width="18" height="20" rx="3" fill="#4772b3"/><circle cx="1501" cy="831" r="6.500" fill="none" stroke="#eee"/><path d="M1501 824.500A6.500 6.500 0 0 1 1501 837.500Z" fill="#eee"/>
 <rect x="1510" y="821" width="19" height="20" rx="3" fill="#262626"/><use href="#chev" x="1520" y="832"/>

 <path d="M0 862L2 864L0 866" stroke="#bbb" fill="none"/>
 <use href="#obj" x="21" y="864"/><text x="37" y="868" class="t">Plane</text>
 <path d="M80 860L84 864L80 868" fill="none" stroke="#bbb"/>
 <path d="M96 859H106L101 870Z" fill="none" stroke="#ddd"/><rect x="94" y="857.500" width="3" height="3" fill="none" stroke="#ddd"/><rect x="105" y="857.500" width="3" height="3" fill="none" stroke="#ddd"/><rect x="100" y="868" width="3" height="3" fill="none" stroke="#ddd"/>
 <text x="116" y="868" class="t">Plane.001</text>
 <path d="M184 860L188 864L184 868" fill="none" stroke="#bbb"/>
 <circle cx="204" cy="864" r="6.500" fill="#e8e8e8"/><path d="M204 857.500A6.500 6.500 0 0 1 204 870.500Z" fill="#333"/><circle cx="206" cy="862.500" r="2.500" fill="#e8e8e8"/>
 <text x="221" y="868" class="t">Material.005</text>

 <rect x="5" y="970.500" width="1315" height="3.500" rx="1.500" fill="#343434"/>
 <rect x="1318" y="866" width="3" height="27" rx="1.500" fill="#333"/>

 <g style="font-size:7.6px">
  <rect x="822" y="843" width="178" height="134" fill="#303030"/>
  <path d="M822 843V976M999.500 843V976" stroke="#b5541a" stroke-width="1.200"/>
  <rect x="830" y="849" width="161" height="15" rx="2" fill="#262626"/><text x="835" y="860" fill="#d0d0d0">Random Walk</text><use href="#chev" x="986" y="857.500"/>
  <text x="830" y="879" fill="#d0d0d0">Base Color</text><rect x="898" y="869" width="93" height="14" rx="2" fill="#bba9ae"/>
  <rect x="830" y="885" width="161" height="14" rx="2" fill="#4f4f4f"/><text x="841" y="895" fill="#d0d0d0">Subsurface</text><text x="981" y="895" class="e" fill="#d0d0d0">0.000</text>
  <rect x="830" y="901" width="161" height="14" rx="2" fill="#262626"/><text x="835" y="911" fill="#d0d0d0">Subsurface Radius</text><use href="#chev" x="986" y="908.500"/>
  <text x="830" y="928" fill="#d0d0d0">Subsurface C...</text><rect x="898" y="918" width="93" height="14" rx="2" fill="#e8e8e8"/>
  <rect x="830" y="934" width="161" height="14" rx="2" fill="#4f4f4f"/><path d="M830 936a2 2 0 0 1 2-2H852V948H832a2 2 0 0 1-2-2Z" fill="#4772b3"/><text x="841" y="944" fill="#e0e0e0">Subsurface IOR</text><text x="981" y="944" class="e" fill="#d0d0d0">1.400</text>
  <rect x="830" y="950" width="161" height="14" rx="2" fill="#4f4f4f"/><text x="841" y="961" fill="#d0d0d0">Subsurface Anisotropy</text><text x="981" y="961" class="e" fill="#d0d0d0">0.000</text>
  <rect x="830" y="966" width="161" height="10" fill="#4f4f4f"/><text x="841" y="976" fill="#bcbcbc">Metallic</text><text x="981" y="976" class="e" fill="#bcbcbc">0.000</text>
  <g stroke="#222" stroke-width=".5"><circle cx="822" cy="876" r="2.800" fill="#c7c729"/><circle cx="822" cy="892" r="2.800" fill="#a1a1a1"/><circle cx="822" cy="908" r="2.800" fill="#6363c7"/><circle cx="822" cy="925" r="2.800" fill="#c7c729"/><circle cx="822" cy="941" r="2.800" fill="#a1a1a1"/><circle cx="822" cy="957" r="2.800" fill="#a1a1a1"/><circle cx="822" cy="973" r="2.800" fill="#a1a1a1"/></g>
  <path d="M1035.500 843V877a4 4 0 0 0 4 4H1135.500a4 4 0 0 0 4-4V843" fill="#303030" stroke="#eee" stroke-width="1"/>
  <text x="1044" y="854.500" fill="#d8d8d8">Volume</text><text x="1044" y="871" fill="#d8d8d8">Displacement</text>
  <circle cx="1036" cy="851" r="2.600" fill="#63c763"/><circle cx="1036" cy="868" r="2.600" fill="#6363c7"/>
 </g>

 <rect x="1324" y="846" width="190" height="130" fill="#1f1f1f"/>
 <rect x="1331" y="845" width="180" height="107" rx="4" fill="#2a2a2a"/>
 <rect x="1331" y="956" width="180" height="20" fill="#2a2a2a"/>
 <use href="#chevL" x="1344" y="857"/><text x="1353" y="861" class="w">Node</text>
 <path d="M1493 855h10M1493 858h10" stroke="#666" stroke-dasharray="1 1.500"/>
 <text x="1340" y="890" class="m">Name:</text><text x="1340" y="915" class="m">Label:</text>
 <rect x="1380" y="878" width="122" height="18" rx="3" fill="#1a1a1a"/><rect x="1380" y="902" width="122" height="18" rx="3" fill="#1a1a1a"/>
 <g id="nIco"><path d="M1386 884V893H1392M1386 884C1386 880 1396 880 1396 884Z" fill="none" stroke="#ddd"/><path d="M1386 881H1396V884H1386Z" fill="#ddd"/><circle cx="1395" cy="888" r="2.200" fill="#999"/></g>
 <use href="#nIco" y="24"/>
 <text x="1404" y="890.500" class="w">Material Output</text>
 <path d="M1356 936L1360 941L1356 946" fill="none" stroke="#bbb"/><rect x="1365" y="935" width="12" height="13" rx="2" fill="#444"/><text x="1380" y="945" class="t">Color</text>
 <circle cx="1470" cy="936" r="1.500" fill="#ddd"/><circle cx="1470" cy="941.500" r="1.500" fill="#ddd"/><circle cx="1470" cy="947" r="1.500" fill="#ddd"/><path d="M1474 936H1482M1474 941.500H1482M1474 947H1482" stroke="#ddd"/>
 <path d="M1342 962L1346 967L1342 972" fill="none" stroke="#bbb"/><text x="1353" y="971" class="t">Properties</text>
 <path d="M1493 965h10M1493 968h10" stroke="#666" stroke-dasharray="1 1.500"/>
 <rect x="1514" y="846" width="23" height="130" fill="#181818"/>
 <path d="M1514 849H1528a4 4 0 0 1 4 4V885a4 4 0 0 1-4 4H1514Z" fill="#2e2e2e"/>
 <path d="M1516 893H1528a4 4 0 0 1 4 4V924a4 4 0 0 1-4 4H1516Z" fill="#212121" stroke="#333"/>
 <path d="M1516 932H1528a4 4 0 0 1 4 4V967a4 4 0 0 1-4 4H1516Z" fill="#212121" stroke="#333"/>
 <g class="t"><text transform="translate(1521,856) rotate(90)" fill="#fff">Node</text><text transform="translate(1521,900) rotate(90)">Tool</text><text transform="translate(1521,939) rotate(90)">View</text></g>

 <rect x="0" y="976" width="1568" height="10" fill="#232323"/>
 <g style="font-size:9.5px" fill="#8a8a8a"><text x="29" y="988">Select</text><text x="234" y="988">Rotate View</text><text x="440" y="988">Object Context Menu</text></g>
 <rect x="7" y="979" width="8" height="9" rx="3" fill="none" stroke="#777"/><rect x="213" y="979" width="8" height="9" rx="3" fill="none" stroke="#777"/><rect x="420" y="979" width="8" height="9" rx="3" fill="#777"/>
</g>
</svg>
</body></html>
